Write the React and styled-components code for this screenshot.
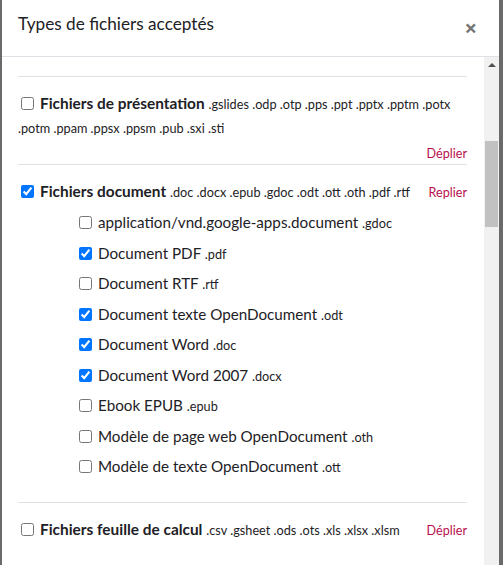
import React, { useLayoutEffect, useRef } from "react";
import styled, { createGlobalStyle } from "styled-components";

const GlobalStyle = createGlobalStyle`
  html, body {
    margin: 0;
    height: 100%;
    overflow: hidden;
    background: #6a6a6a;
  }
  body {
    font-family: Lato, "Open Sans", sans-serif;
    color: #1d2125;
  }
`;

const groups = [
  { id: "archive", name: "Fichiers archive", exts: ".7z .ace .cab .gtar .gz .rar .tar .tgz .zip" },
  {
    id: "audio",
    name: "Fichiers audio",
    exts: ".aac .aif .aifc .aiff .au .flac .m3u .m4a .mp3 .oga .ogg .ra .ram .rm .wav .wma",
  },
  {
    id: "image",
    name: "Fichiers image",
    exts: ".ai .bmp .gdraw .gif .ico .jpe .jpeg .jpg .pct .pic .pict .png .svg .svgz .tif .tiff",
  },
  { id: "web_image", name: "Fichiers image web", exts: ".gif .jpe .jpeg .jpg .png .svg .svgz" },
  {
    id: "presentation",
    name: "Fichiers de présentation",
    exts: ".gslides .odp .otp .pps .ppt .pptx .pptm .potx .potm .ppam .ppsx .ppsm .pub .sxi .sti",
  },
  {
    id: "document",
    name: "Fichiers document",
    exts: ".doc .docx .epub .gdoc .odt .ott .oth .pdf .rtf",
    checked: true,
    open: true,
    items: [
      { name: "application/vnd.google-apps.document", ext: ".gdoc" },
      { name: "Document PDF", ext: ".pdf", checked: true },
      { name: "Document RTF", ext: ".rtf" },
      { name: "Document texte OpenDocument", ext: ".odt", checked: true },
      { name: "Document Word", ext: ".doc", checked: true },
      { name: "Document Word 2007", ext: ".docx", checked: true },
      { name: "Ebook EPUB", ext: ".epub" },
      { name: "Modèle de page web OpenDocument", ext: ".oth" },
      { name: "Modèle de texte OpenDocument", ext: ".ott" },
    ],
  },
  { id: "spreadsheet", name: "Fichiers feuille de calcul", exts: ".csv .gsheet .ods .ots .xls .xlsx .xlsm" },
  {
    id: "video",
    name: "Fichiers vidéo",
    exts: ".3gp .avi .dv .dif .flv .f4v .fmp4 .mov .movie .mp4 .m4v .mpeg .mpe .mpg .ogv .qt .rm .rmvb .rv .swf .swfl .webm .wmv .asf",
  },
  { id: "web_video", name: "Fichiers vidéo web", exts: ".m4v .mp4 .ogv .webm" },
  { id: "web_audio", name: "Fichiers audio web", exts: ".aac .flac .mp3 .m4a .oga .ogg .wav" },
  { id: "web_file", name: "Fichiers web", exts: ".css .html .xhtml .htm .js .scss" },
  { id: "html_track", name: "Fichiers de piste HTML", exts: ".vtt" },
  { id: "moodle", name: "Fichiers Moodle", exts: ".mbz .h5p .imscc" },
  { id: "text", name: "Fichiers texte", exts: ".txt .md .log .xml .json .tex .sql" },
];

const FileTypesDialog = () => {
  const listRef = useRef(null);
  const anchorRef = useRef(null);

  // open the list scrolled down to the presentation group
  useLayoutEffect(() => {
    if (listRef.current && anchorRef.current) {
      listRef.current.scrollTop = anchorRef.current.offsetTop - 19;
    }
  }, []);

  return (
    <Modal>
      <Header>
        <Title>Types de fichiers acceptés</Title>
        <Close aria-label="Fermer">×</Close>
      </Header>
      <Body>
        <Scroller ref={listRef}>
          {groups.map((group) => (
            <Group key={group.id} ref={group.id === "presentation" ? anchorRef : null}>
              <HeadRow>
                <GroupLabel>
                  <Check type="checkbox" defaultChecked={!!group.checked} />
                  <GroupName>{group.name}</GroupName> <Exts>{group.exts}</Exts>
                </GroupLabel>
                <Toggle type="button">{group.open ? "Replier" : "Déplier"}</Toggle>
              </HeadRow>
              {group.open && (
                <SubList>
                  {group.items.map((item) => (
                    <SubItem key={item.name}>
                      <label>
                        <Check type="checkbox" defaultChecked={!!item.checked} />
                        {item.name} <Exts>{item.ext}</Exts>
                      </label>
                    </SubItem>
                  ))}
                </SubList>
              )}
            </Group>
          ))}
        </Scroller>
        <Rail>
          <RailButton aria-hidden="true" />
          <Thumb />
        </Rail>
      </Body>
    </Modal>
  );
};

const Modal = styled.div`
  margin-left: 2px;
  width: 497px;
  background: #fff;
  display: flex;
  flex-direction: column;
`;

const Header = styled.div`
  height: 57px;
  box-sizing: border-box;
  padding: 9px 22px 0 16px;
  display: flex;
  justify-content: space-between;
  align-items: flex-start;
  border-bottom: 1px solid #dee2e6;
`;

const Title = styled.h5`
  margin: 0;
  font-size: 17.2px;
  font-weight: 400;
  line-height: 30px;
`;

const Close = styled.button`
  border: 0;
  background: none;
  padding: 0;
  margin-top: 3px;
  font-family: "Open Sans", sans-serif;
  font-size: 22px;
  font-weight: 700;
  line-height: 30px;
  color: #767676;
  cursor: pointer;
`;

const Body = styled.div`
  display: flex;
  height: 530px;
`;

const Scroller = styled.div`
  position: relative;
  flex: 1;
  min-width: 0;
  overflow: hidden;
  padding: 0 17px 0 16px;
`;

/* classic scrollbar look: grey track, up arrow, thumb */
const Rail = styled.div`
  width: 15px;
  flex: none;
  background: #f1f1f1;
  display: flex;
  flex-direction: column;
  align-items: center;
`;

const RailButton = styled.div`
  height: 15px;
  width: 15px;
  display: flex;
  align-items: center;
  justify-content: center;
  &::before {
    content: "";
    border-left: 4px solid transparent;
    border-right: 4px solid transparent;
    border-bottom: 4px solid #505050;
  }
`;

const Thumb = styled.div`
  width: 13px;
  height: 86px;
  margin-top: 69px;
  background: #c1c1c1;
`;

const Group = styled.section`
  border-top: 1px solid #dee2e6;
  padding-top: 14px;
  min-height: 72px;
  box-sizing: border-box;
`;

const HeadRow = styled.div`
  display: flex;
  flex-wrap: wrap;
  align-items: baseline;
  row-gap: 5px;
`;

const GroupLabel = styled.label`
  flex: 0 1 auto;
  min-width: 0;
  font-size: 15px;
  line-height: 24px;
`;

const Check = styled.input`
  width: 13px;
  height: 13px;
  margin: 0 6px 0 3px;
  vertical-align: -1px;
`;

const GroupName = styled.strong`
  font-size: 15.4px;
  font-weight: 700;
  line-height: 1;
`;

const Exts = styled.small`
  font-size: 12.7px;
  line-height: 1;
`;

const Toggle = styled.button`
  flex: none;
  margin-left: auto;
  padding: 0 0 0 6px;
  border: 0;
  background: none;
  font-family: Lato, sans-serif;
  font-size: 12.6px;
  line-height: 20px;
  color: #b8104e;
  cursor: pointer;
`;

const SubList = styled.ul`
  list-style: none;
  margin: 4px 0 20px;
  padding: 0 0 0 58px;
`;

const SubItem = styled.li`
  padding: 4px 0;
  font-size: 15.2px;
  line-height: 22.5px;
  height: 22.5px;
`;

export default function App() {
  return (
    <>
      <GlobalStyle />
      <FileTypesDialog />
    </>
  );
}
